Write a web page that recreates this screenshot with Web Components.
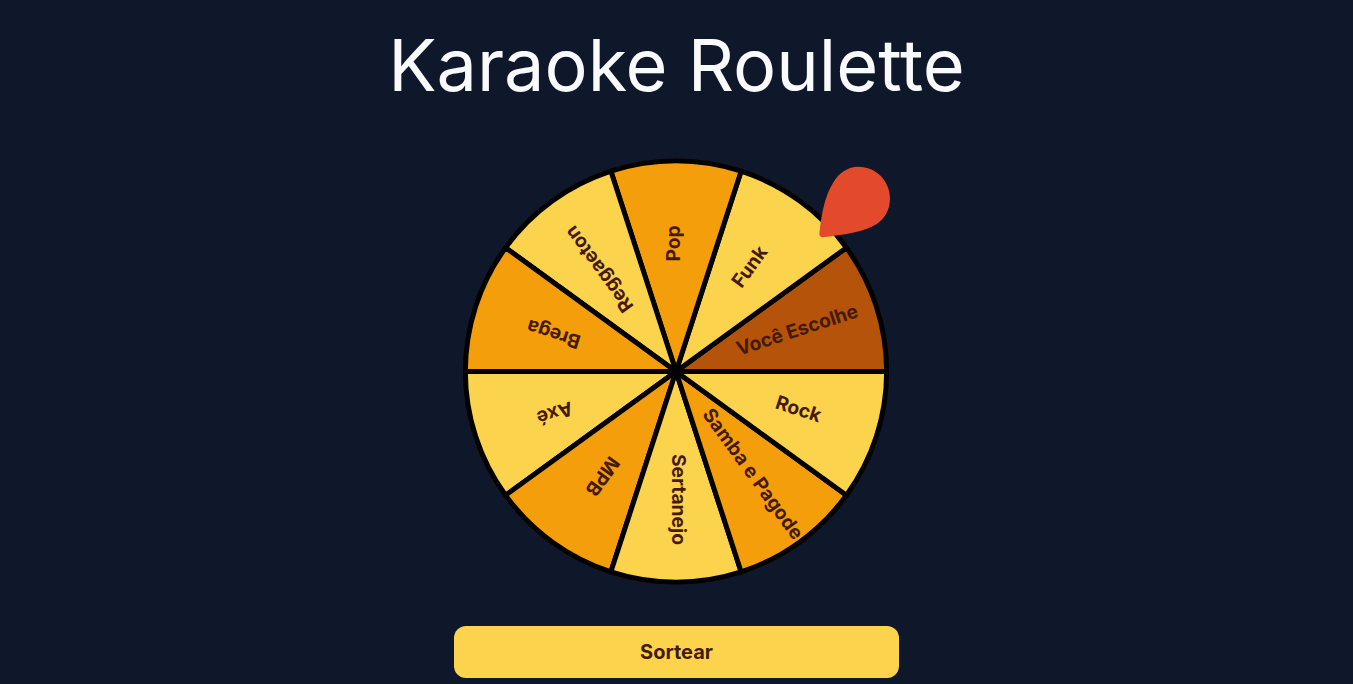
<!DOCTYPE html>
<html lang="pt-BR">
<head>
<meta charset="utf-8">
<meta name="viewport" content="width=device-width, initial-scale=1">
<title>Karaoke Roulette</title>
<style>
  body { margin: 0; background: #0f172a; color: #f8fafc; font-family: Inter, sans-serif; }
</style>
</head>
<body>
<karaoke-app>
  <span slot="title">Karaoke Roulette</span>
  <roulette-wheel options="Você Escolhe|Funk|Pop|Reggaeton|Brega|Axé|MPB|Sertanejo|Samba e Pagode|Rock"></roulette-wheel>
  <draw-button>Sortear</draw-button>
</karaoke-app>
<script>
class KaraokeApp extends HTMLElement {
  constructor() {
    super();
    this.attachShadow({ mode: "open" }).innerHTML = `
      <style>
        :host { display: block; }
        main { display: flex; flex-direction: column; align-items: center; gap: 32px; padding: 20px 16px 6px; }
        h1 { margin: 0; padding-bottom: 7px; font-size: 72px; line-height: 90px; font-weight: 400; text-align: center; }
        section { display: grid; gap: 32px; width: 100%; max-width: 445px; }
      </style>
      <main>
        <h1><slot name="title"></slot></h1>
        <section><slot></slot></section>
      </main>`;
  }
}

class RouletteWheel extends HTMLElement {
  constructor() {
    super();
    this.attachShadow({ mode: "open" }).innerHTML = `
      <style>
        :host { display: block; }
        svg { display: block; width: 100%; height: auto; }
        .slice { stroke: #000; stroke-width: 10; }
        text { font-family: Inter, sans-serif; font-size: 39px; font-weight: 700; fill: #451a03; text-anchor: middle; }
      </style>
      <svg viewBox="0 0 900 900" role="img" aria-label="Roleta">
        <g class="wheel" transform="translate(449 450)"></g>
        <path class="pointer" fill="#e34a2c" transform="scale(2.0225)" d="M404.5 17.7C422 17.7 436 32 436 49.5C436 60 431 69.5 422.7 75C410 83 392 85.5 369 88.2C366.5 88.4 365.2 87 365.4 84.6C367.5 62 372 45 379 34C385 23.5 394 17.7 404.5 17.7Z"/>
      </svg>`;
  }

  connectedCallback() {
    const options = this.getAttribute("options").split("|");
    const wheel = this.shadowRoot.querySelector(".wheel");
    const step = 360 / options.length;
    const radius = 426;
    const point = (deg) => {
      const a = deg * Math.PI / 180;
      return `${(radius * Math.cos(a)).toFixed(2)} ${(radius * Math.sin(a)).toFixed(2)}`;
    };
    const color = (i) => i === 0 ? "#b45309" : i % 2 ? "#fcd34d" : "#f59e0b";
    const slices = options.map((_, i) =>
      `<path class="slice" fill="${color(i)}" stroke-linejoin="bevel" d="M0 0L${point(-i * step)}A${radius} ${radius} 0 0 0 ${point(-(i + 1) * step)}Z"/>`);
    const labels = options.map((name, i) =>
      `<text transform="rotate(${-(i + 0.5) * step})" x="259" y="9">${name}</text>`);
    wheel.innerHTML = slices.join("") + '<circle r="16"/>' + labels.join("");
  }
}

class DrawButton extends HTMLElement {
  constructor() {
    super();
    this.attachShadow({ mode: "open" }).innerHTML = `
      <style>
        :host { display: block; }
        button { display: block; width: 100%; padding: 12px 24px; border: 0; border-radius: 12px; background: #fcd34d; color: #451a03; font: 700 20px/28px Inter, sans-serif; cursor: pointer; }
      </style>
      <button type="button"><slot></slot></button>`;
  }
}

customElements.define("karaoke-app", KaraokeApp);
customElements.define("roulette-wheel", RouletteWheel);
customElements.define("draw-button", DrawButton);
</script>
</body>
</html>
